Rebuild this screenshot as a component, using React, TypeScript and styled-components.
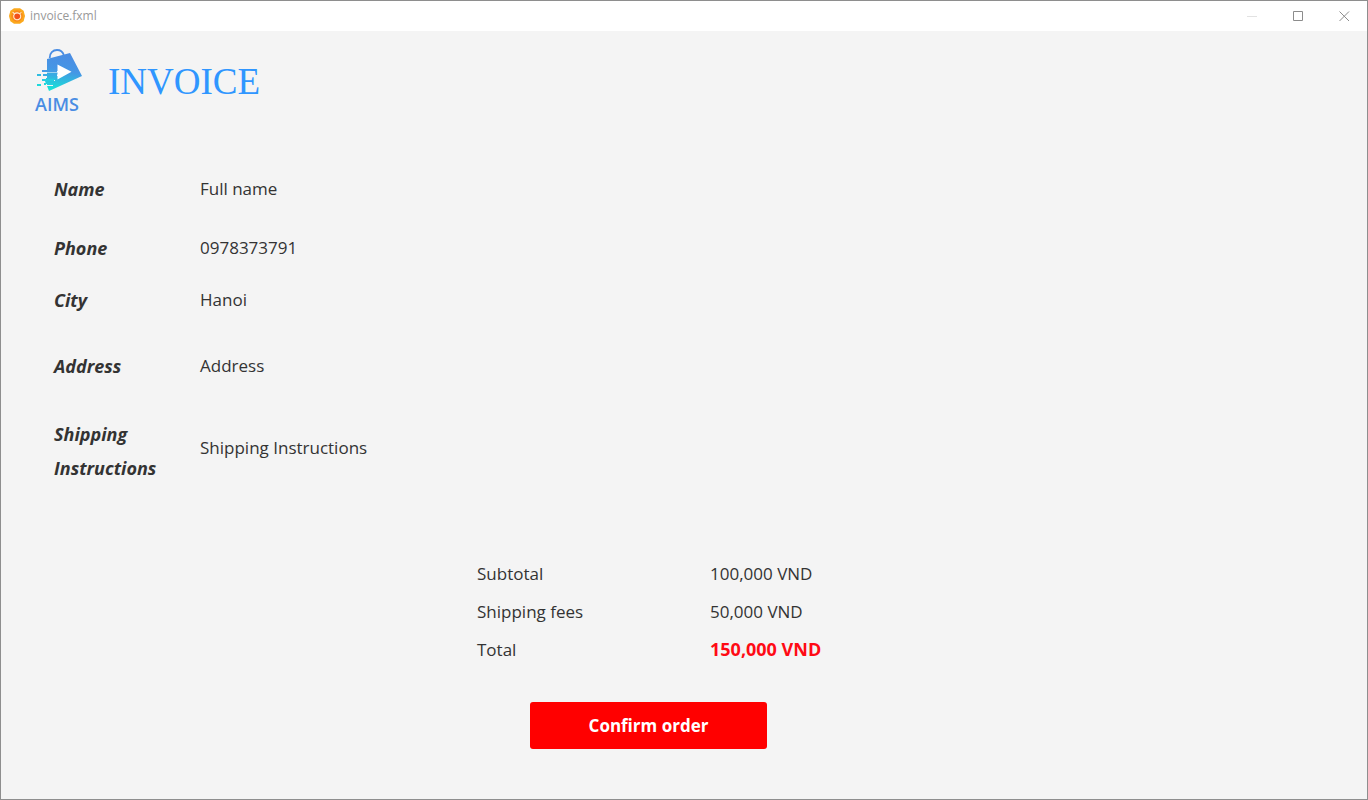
import React from "react";
import styled, { createGlobalStyle } from "styled-components";

const GlobalStyle = createGlobalStyle`
  *, *::before, *::after { box-sizing: border-box; }
  body {
    margin: 0;
    font-family: "Open Sans", "Noto Sans", sans-serif;
    font-size: 17px;
    color: #333333;
  }
`;

const Window = styled.div`
  display: flex;
  flex-direction: column;
  min-height: 100vh;
  border: 1px solid #8e8e8e;
  background: #f4f4f4;
`;

const TitleBar = styled.header`
  display: flex;
  align-items: center;
  height: 30px;
  padding-left: 8px;
  background: #ffffff;
`;

const WindowTitle = styled.span`
  flex: 1;
  margin-left: 5px;
  font-size: 12px;
  line-height: 16px;
  color: #999999;
`;

const WindowButton = styled.button<{ $color?: string }>`
  display: grid;
  place-items: center;
  width: 46px;
  height: 28px;
  padding: 0;
  border: 0;
  background: transparent;
  color: ${({ $color }) => $color ?? "#8c8c8c"};
`;

const Invoice = styled.main`
  display: flex;
  flex-direction: column;
  flex: 1;
`;

const Heading = styled.div`
  display: flex;
  align-items: center;
  gap: 26px;
  height: 129px;
  padding: 0 31px 28px;
`;

const Brand = styled.div`
  display: flex;
  flex-direction: column;
  align-items: center;
  width: 50px;
`;

const BrandName = styled.span`
  font-size: 18px;
  line-height: 22px;
  font-weight: 600;
  color: #4a8de3;
`;

const Title = styled.h1`
  margin: 0;
  font-family: "Liberation Serif", serif;
  font-size: 37px;
  line-height: 44px;
  font-weight: 400;
  color: #2f96ff;
`;

const Details = styled.dl`
  margin: 0;
  padding: 0 53px;
`;

const Detail = styled.div<{ $height: number }>`
  display: grid;
  grid-template-columns: 146px 1fr;
  align-items: center;
  min-height: ${({ $height }) => $height}px;
`;

const Label = styled.dt`
  width: 110px;
  font-size: 18px;
  line-height: 34px;
  font-weight: 700;
  font-style: italic;
`;

const Value = styled.dd<{ $raised?: boolean }>`
  margin: 0;
  padding-bottom: ${({ $raised }) => ($raised ? "6px" : "0")};
  line-height: 34px;
`;

const Checkout = styled.section`
  display: flex;
  flex-direction: column;
  align-items: center;
  margin-top: 62px;
  padding: 0 71px 50px 0;
`;

const Totals = styled.table`
  width: 343px;
  border-collapse: collapse;
  table-layout: fixed;
`;

const AmountName = styled.th`
  width: 233px;
  height: 38px;
  padding: 0;
  font-weight: 400;
  text-align: left;
`;

const Amount = styled.td<{ $total?: boolean }>`
  padding: 0;
  white-space: nowrap;
  font-size: ${({ $total }) => ($total ? "18px" : "17px")};
  font-weight: ${({ $total }) => ($total ? 700 : 400)};
  color: ${({ $total }) => ($total ? "#ff0a14" : "inherit")};
`;

const ConfirmButton = styled.button`
  width: 237px;
  height: 47px;
  margin-top: 34px;
  padding: 0;
  border: 0;
  border-radius: 3px;
  background: #ff0000;
  color: #ffffff;
  font: inherit;
  font-weight: 700;
`;

const AppIcon = () => (
  <svg width="16" height="16" viewBox="0 0 16 16" aria-hidden="true">
    <path d="M5 .2h6l3.600 2.600L16 8l-1.400 5.200L11 15.800H5l-3.600-2.600L0 8l1.400-5.200z" fill="#fba81c" />
    <circle cx="8" cy="8" r="5.800" fill="#f98a1a" />
    <circle cx="8.300" cy="8.500" r="3.200" fill="#f2501a" />
    <path d="M3.600 4.200l2 1.600M5.600 5.800c1.500-1.400 3.900-1.200 5.200.2 1.500 1.600 1.100 4.300-.8 5.300-2 1-4.400.2-5.100-1.700-.5-1.400-.3-2.800.7-3.800M10.800 5.600l1.600-1.200" fill="none" stroke="#ffead2" strokeWidth="1.100" />
  </svg>
);

const BagLogo = () => (
  <svg width="50" height="44" viewBox="0 3 50 44" overflow="visible" aria-hidden="true">
    <defs>
      <linearGradient id="bag" x1="0.300" y1="0" x2="0.100" y2="1">
        <stop offset="0" stopColor="#4a8de3" />
        <stop offset="0.400" stopColor="#4596e5" />
        <stop offset="1" stopColor="#12ead6" />
      </linearGradient>
    </defs>
    <path d="M17.700 12C17.500 7 21 4 25 4c3.500 0 5.800 1.800 6.800 5" fill="none" stroke="#4a8de3" strokeWidth="1.800" />
    <path d="M15 13L38 7l12 23-33 15-2-5h6v-2h-7l-1-3h10v-2H15z" fill="url(#bag)" />
    <path d="M25.500 18.500l14 7.200-14 7.800v-3.500h-12v-1.500h12v-2H15v-1.500h10.500z" fill="#ffffff" />
    <path d="M10 24h15v2H10z" fill="#459be5" />
    <path d="M11 28h14v2H11z" fill="#38ace3" />
    <path d="M5 28h4v2H5zM14 32h9v2h-9z" fill="#2fbde0" />
    <path d="M10 33h12v2H10zM15 37h6v2h-6z" fill="#25cde0" />
    <path d="M5 38h4v2H5zM12 37h2v2h-2z" fill="#1fd9dc" />
  </svg>
);

const details = [
  { label: "Name", value: "Full name", height: 58 },
  { label: "Phone", value: "0978373791", height: 60 },
  { label: "City", value: "Hanoi", height: 44 },
  { label: "Address", value: "Address", height: 88 },
  { label: "Shipping Instructions", value: "Shipping Instructions", height: 82, raised: true },
];

const amounts = [
  { name: "Subtotal", amount: "100,000 VND" },
  { name: "Shipping fees", amount: "50,000 VND" },
  { name: "Total", amount: "150,000 VND", total: true },
];

export default function App() {
  return (
    <>
      <GlobalStyle />
      <Window>
        <TitleBar>
          <AppIcon />
          <WindowTitle>invoice.fxml</WindowTitle>
          <WindowButton aria-label="Minimize" $color="#e2e2e2">
            <svg width="11" height="11" viewBox="0 0 11 11"><path d="M0 5.500h10" stroke="currentColor" /></svg>
          </WindowButton>
          <WindowButton aria-label="Maximize">
            <svg width="11" height="11" viewBox="0 0 11 11"><path d="M.5.5h9v9h-9z" fill="none" stroke="currentColor" /></svg>
          </WindowButton>
          <WindowButton aria-label="Close">
            <svg width="11" height="11" viewBox="0 0 11 11"><path d="M.5.5l9.500 9.500M10 .5l-9.500 9.500" stroke="currentColor" /></svg>
          </WindowButton>
        </TitleBar>
        <Invoice>
          <Heading>
            <Brand>
              <BagLogo />
              <BrandName>AIMS</BrandName>
            </Brand>
            <Title>INVOICE</Title>
          </Heading>
          <Details>
            {details.map((d) => (
              <Detail key={d.label} $height={d.height}>
                <Label>{d.label}</Label>
                <Value $raised={d.raised}>{d.value}</Value>
              </Detail>
            ))}
          </Details>
          <Checkout>
            <Totals>
              <tbody>
                {amounts.map((a) => (
                  <tr key={a.name}>
                    <AmountName scope="row">{a.name}</AmountName>
                    <Amount $total={a.total}>{a.amount}</Amount>
                  </tr>
                ))}
              </tbody>
            </Totals>
            <ConfirmButton>Confirm order</ConfirmButton>
          </Checkout>
        </Invoice>
      </Window>
    </>
  );
}
